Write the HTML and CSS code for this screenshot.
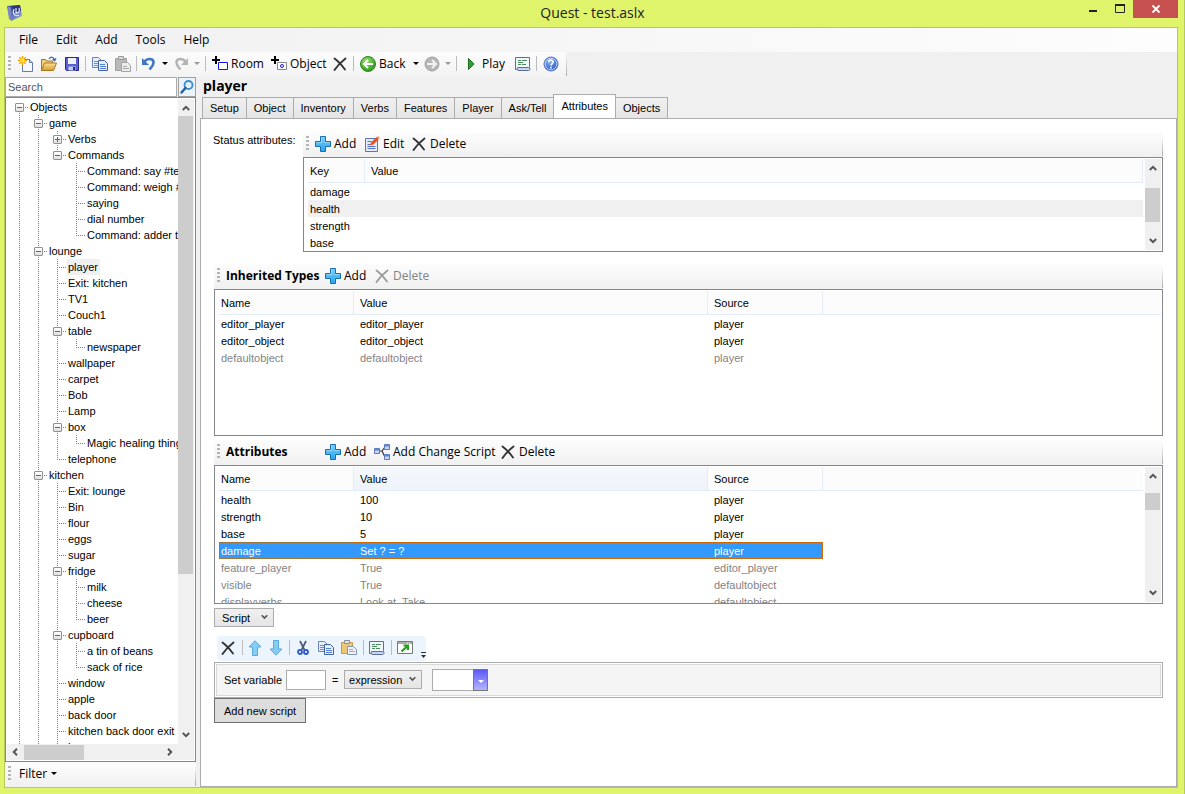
FILE: index.html
```html
<!DOCTYPE html>
<html lang="en">
<head>
<meta charset="utf-8">
<title>Quest - test.aslx</title>
<link rel="stylesheet" href="styles.css">
</head>
<body>
<svg class="defs" aria-hidden="true">
  <defs>
    <linearGradient id="gBlue" x1="0" y1="0" x2="0" y2="1"><stop offset="0" stop-color="#7fd0f8"/><stop offset="1" stop-color="#2aa4ea"/></linearGradient>
    <linearGradient id="gGold" x1="0" y1="0" x2="0" y2="1"><stop offset="0" stop-color="#fbe39a"/><stop offset="1" stop-color="#d99a2b"/></linearGradient>
    <radialGradient id="gGreen" cx=".4" cy=".3" r=".8"><stop offset="0" stop-color="#9be06a"/><stop offset="1" stop-color="#1f8f16"/></radialGradient>
    <radialGradient id="gHelp" cx=".4" cy=".3" r=".8"><stop offset="0" stop-color="#8fb6f5"/><stop offset="1" stop-color="#1748b8"/></radialGradient>
    <linearGradient id="gApp" x1="0" y1="0" x2="1" y2="1"><stop offset="0" stop-color="#1d2560"/><stop offset=".5" stop-color="#5a6cb8"/><stop offset="1" stop-color="#a9bbe8"/></linearGradient>
    <symbol id="i-plus" viewBox="0 0 16 16"><path d="M5.5.5h5v5h5v5h-5v5h-5v-5h-5v-5h5z" fill="url(#gBlue)" stroke="#1470b4"/><path d="M6.500 1.500v5h-5M9.500 6.500h5" fill="none" stroke="#a8e2fc" opacity=".7"/></symbol>
    <symbol id="i-x" viewBox="0 0 16 16"><path d="M2.500 2.500C6 5 10 9.500 13 13.500M13.500 2.500C9 6 5.500 9.500 2.500 14" fill="none" stroke="currentColor" stroke-width="1.900" stroke-linecap="round"/></symbol>
    <symbol id="i-edit" viewBox="0 0 16 16"><path d="M1.500 2.500h12v13h-12z" fill="#e4ecfb" stroke="#5a76b8"/><path d="M3.500 5.500h4M3.500 8.500h3M3.500 10.500h8M3.500 12.500h8" stroke="#5573c4"/><path d="M6 9.500l1-3L12.500 1l2.500 2L9.500 8.500z" fill="#e9531f"/><path d="M12.500 1L14 0l2 2-1 1z" fill="#f49a6a"/></symbol>
    <symbol id="i-flow" viewBox="0 0 16 16"><path d="M5 7h3M8 7l3-4M8 7l3 6" stroke="#333" stroke-width="1.200" fill="none"/><path d="M.5 4.500h5v5h-5zM10.500.5h5v5h-5zM10.500 10.500h5v5h-5z" fill="#c9d6f6" stroke="#5f78b8"/><path d="M1 5.500h4M11 1.500h4M11 11.500h4" stroke="#5b86d8" stroke-width="2"/></symbol>
    <symbol id="i-new" viewBox="0 0 16 16"><path d="M4.500 3.500h7l3 3v9h-10z" fill="#f4f8ff" stroke="#6b7b98"/><path d="M11.500 3.500v3h3" fill="#cfdcf2" stroke="#6b7b98"/><path d="M4.500 0v9M0 4.500h9M1.300 1.300l6.400 6.400M7.700 1.300L1.300 7.700" stroke="#f3a200" stroke-width="1.400"/><circle cx="4.500" cy="4.500" r="2.200" fill="#ffe14a"/></symbol>
    <symbol id="i-open" viewBox="0 0 16 16"><path d="M.5 14.500v-11h4l1 1.500h6v3" fill="#f1d080" stroke="#a87720"/><path d="M.5 14.500l3-7.500h12l-3 7.500z" fill="url(#gGold)" stroke="#a87720"/><path d="M8 3c2-3 5-2 5.500 1M11.500 3l2.200 1.800L15 2.300" fill="none" stroke="#3b67b8" stroke-width="1.200"/></symbol>
    <symbol id="i-save" viewBox="0 0 16 16"><path d="M1.500 1.500h13v13h-12l-1-1z" fill="#5a62d0" stroke="#23288c"/><path d="M4 2h8v6H4z" fill="#eef2fc"/><path d="M4.500 10.500h7v4h-7z" fill="#c8cef0"/><path d="M9 11h2v3H9z" fill="#23288c"/></symbol>
    <symbol id="i-copy" viewBox="0 0 16 16"><path d="M.5 1.500h6l3 3v7h-9z" fill="#e6eefc" stroke="#6485c0"/><path d="M2 5.500h4M2 7.500h4M2 9.500h4" stroke="#6c90d4"/><path d="M6.500 4.500h6l3 3v7h-9z" fill="#e6eefc" stroke="#3f62a8"/><path d="M8 8.500h5M8 10.500h6M8 12.500h6" stroke="#5580cf"/></symbol>
    <symbol id="i-pasteoff" viewBox="0 0 16 16"><path d="M.5 2.500h11v12H.5z" fill="#b9b9b9" stroke="#a0a0a0"/><path d="M3.500.5h5v3h-5z" fill="#dcdcdc" stroke="#999"/><path d="M6.500 6.500h6l3 3v6h-9z" fill="#ececec" stroke="#a4a4a4"/><path d="M8 10.500h4M8 12.500h6" stroke="#aaa"/></symbol>
    <symbol id="i-paste" viewBox="0 0 16 16"><path d="M.5 2.500h11v11H.5z" fill="#ebc878" stroke="#c99a48"/><path d="M3.500.5h5v3h-5z" fill="#dfe3ea" stroke="#8c8c98"/><path d="M6.500 6.500h6l3 3v5h-9z" fill="#eef2fa" stroke="#8493b4"/><path d="M8 9.500h4M8 11.500h6" stroke="#94a6cc"/></symbol>
    <symbol id="i-undo" viewBox="0 0 16 16"><path d="M3 6c3-4 9-4 9.500 0 .3 3-2 5-4 7.500" fill="none" stroke="#3f76c6" stroke-width="2.600"/><path d="M1 2v7h7z" fill="#3f76c6"/></symbol>
    <symbol id="i-redo" viewBox="0 0 16 16"><path d="M13 6c-3-4-9-4-9.500 0-.3 3 2 5 4 7.500" fill="none" stroke="#b4b4b4" stroke-width="2.400"/><path d="M15 2v7H8z" fill="#b4b4b4"/></symbol>
    <symbol id="i-room" viewBox="0 0 16 16"><path d="M4 0v8M0 4h8" stroke="#000" stroke-width="2"/><path d="M6.500 6.500h9v7h-9z" fill="#fff" stroke="#1414f0"/></symbol>
    <symbol id="i-object" viewBox="0 0 16 16"><path d="M4 0v8M0 4h8" stroke="#000" stroke-width="2"/><path d="M6.500 6.500h9v7h-9z" fill="#fff" stroke="#888"/><circle cx="11" cy="10" r="1.500" fill="none" stroke="#1414f0"/></symbol>
    <symbol id="i-back" viewBox="0 0 16 16"><circle cx="8" cy="8" r="7.500" fill="url(#gGreen)" stroke="#2d8a20"/><path d="M13 8H4.500M8 4L4 8l4 4" fill="none" stroke="#fff" stroke-width="2"/></symbol>
    <symbol id="i-fwd" viewBox="0 0 16 16"><circle cx="8" cy="8" r="7" fill="#b6b6b6" stroke="#a2a2a2"/><path d="M3 8h8.500M8 4l4 4-4 4" fill="none" stroke="#f2f2f2" stroke-width="2"/></symbol>
    <symbol id="i-play" viewBox="0 0 16 16"><path d="M5.500 2.500L11 8l-5.500 5.500z" fill="#2fa02c" stroke="#1c6e1e"/></symbol>
    <symbol id="i-log" viewBox="0 0 16 16"><path d="M.5 1.500h14v9l-1 3H.5z" fill="#f2f6ff" stroke="#5c6c9c"/><path d="M3 4.500h3M7 4.500h5M3 6.500h5M3 8.500h3M7 8.500h4" stroke="#4a8a5c"/><path d="M2.500 11.500h11c2 0 2 3 0 3H4c-2 0-2-1-1.500-3z" fill="#c8d6f2" stroke="#5c6c9c"/></symbol>
    <symbol id="i-help" viewBox="0 0 16 16"><circle cx="8" cy="8" r="7" fill="url(#gHelp)" stroke="#5078c8"/><circle cx="8" cy="8" r="5.800" fill="none" stroke="#dbe7ff" stroke-width=".8"/><path d="M5.800 6.300c0-3 4.500-2.800 4.400-.2C10.200 7.600 8 7.700 8 9.500M8 10.800v1.600" fill="none" stroke="#fff" stroke-width="1.600"/></symbol>
    <symbol id="i-up" viewBox="0 0 16 16"><path d="M8 .8L14 7h-3.500v8.500h-5V7H2z" fill="#86cdf3" stroke="#5aa7d8"/></symbol>
    <symbol id="i-down" viewBox="0 0 16 16"><path d="M8 15.200L14 9h-3.500V.5h-5V9H2z" fill="#86cdf3" stroke="#5aa7d8"/></symbol>
    <symbol id="i-cut" viewBox="0 0 16 16"><path d="M5 1l4.500 9M11 1L6.500 10" stroke="#4c5c78" stroke-width="1.700"/><circle cx="5" cy="12" r="2" fill="none" stroke="#2f5ccc" stroke-width="1.800"/><circle cx="11" cy="12" r="2" fill="none" stroke="#2f5ccc" stroke-width="1.800"/></symbol>
    <symbol id="i-popout" viewBox="0 0 16 16"><path d="M.5 1.500h15v12H.5z" fill="#fff" stroke="#777"/><path d="M1 3h14" stroke="#aaa" stroke-width="2"/><path d="M10 3h1M12 3h1" stroke="#fff"/><path d="M4.500 11.500L10 6.500M6.500 5.500h4.500v4.500" fill="none" stroke="#24a01c" stroke-width="2.200"/></symbol>
    <symbol id="i-find" viewBox="0 0 16 16"><circle cx="9.500" cy="6" r="4" fill="#e2f2fc" stroke="#3c8ccc" stroke-width="1.800"/><path d="M6.500 9L2.500 13.500" stroke="#2b5c98" stroke-width="2.400" stroke-linecap="round"/></symbol>
    <symbol id="i-app" viewBox="0 0 16 16"><path d="M0 1l13-1 2 11-11 5z" fill="url(#gApp)"/><path d="M0 1l2 13 3 2L4 2z" fill="#7886c6"/><path d="M5 1l8-1 1 6-8 2z" fill="#2a3478"/><path d="M7 4c-2 5 1 8 5 6M12 3c1 3 0 5-3 5M9 3v6" stroke="#dfe6fa" stroke-width="1.200" fill="none"/></symbol>
    <symbol id="i-caret" viewBox="0 0 6 3"><path d="M0 0h6L3 3z" fill="currentColor"/></symbol>
    <symbol id="i-chev" viewBox="0 0 8 6"><path d="M.8 1L4 4.200 7.200 1" fill="none" stroke="currentColor" stroke-width="2"/></symbol>
  </defs>
</svg>

<div class="window">
  <header class="titlebar">
    <svg class="icon"><use href="#i-app"/></svg>
    <h1 class="title">Quest - test.aslx</h1>
    <div class="winbtns">
      <button class="winbtn" aria-label="Minimize"><svg width="10" height="10"><path d="M1 7h8" stroke="#222" stroke-width="2"/></svg></button>
      <button class="winbtn" aria-label="Maximize"><svg width="10" height="10"><path d="M.5 1h9v7.500h-9z" fill="none" stroke="#222"/><path d="M0 1h10" stroke="#222" stroke-width="2"/></svg></button>
      <button class="winbtn winbtn-close" aria-label="Close"><svg width="10" height="10"><path d="M1.500 1.500l7 7M8.500 1.500l-7 7" stroke="#fff" stroke-width="1.800"/></svg></button>
    </div>
  </header>

  <div class="frame">
    <nav class="menu">
      <button>File</button><button>Edit</button><button>Add</button><button>Tools</button><button>Help</button>
    </nav>

    <div class="toolbar toolbar-main">
      <span class="grip"></span>
      <button class="tool" aria-label="New"><svg class="icon"><use href="#i-new"/></svg></button>
      <button class="tool" aria-label="Open"><svg class="icon"><use href="#i-open"/></svg></button>
      <button class="tool" aria-label="Save"><svg class="icon"><use href="#i-save"/></svg></button>
      <span class="sep"></span>
      <button class="tool" aria-label="Copy"><svg class="icon"><use href="#i-copy"/></svg></button>
      <button class="tool" aria-label="Paste" disabled><svg class="icon"><use href="#i-pasteoff"/></svg></button>
      <span class="sep"></span>
      <button class="tool tool-split" aria-label="Undo"><svg class="icon"><use href="#i-undo"/></svg></button>
      <button class="drop" aria-label="Undo list"><svg class="caret"><use href="#i-caret"/></svg></button>
      <button class="tool tool-split" aria-label="Redo" disabled><svg class="icon"><use href="#i-redo"/></svg></button>
      <button class="drop" aria-label="Redo list" disabled><svg class="caret"><use href="#i-caret"/></svg></button>
      <span class="sep"></span>
      <button class="tool tool-text w-room"><svg class="icon"><use href="#i-room"/></svg>Room</button>
      <button class="tool tool-text w-object"><svg class="icon"><use href="#i-object"/></svg>Object</button>
      <button class="tool" aria-label="Delete"><svg class="icon"><use href="#i-x"/></svg></button>
      <span class="sep"></span>
      <button class="tool tool-text w-back"><svg class="icon"><use href="#i-back"/></svg>Back</button>
      <button class="drop" aria-label="Back list"><svg class="caret"><use href="#i-caret"/></svg></button>
      <button class="tool tool-split" aria-label="Forward" disabled><svg class="icon"><use href="#i-fwd"/></svg></button>
      <button class="drop" aria-label="Forward list" disabled><svg class="caret"><use href="#i-caret"/></svg></button>
      <span class="sep"></span>
      <button class="tool tool-text w-play"><svg class="icon"><use href="#i-play"/></svg>Play</button>
      <button class="tool" aria-label="Log"><svg class="icon"><use href="#i-log"/></svg></button>
      <span class="sep"></span>
      <button class="tool" aria-label="Help"><svg class="icon"><use href="#i-help"/></svg></button>
    </div>

    <div class="body">
      <aside class="sidebar">
        <div class="search">
          <input class="search-input" type="text" placeholder="Search" aria-label="Search">
          <button class="search-btn" aria-label="Find"><svg class="icon"><use href="#i-find"/></svg></button>
        </div>
        <div class="treebox">
          <div class="tree-row">
            <div class="tree">
              <ul>
                <li class="root"><div class="node"><button class="exp" aria-label="Collapse"></button><span>Objects</span></div>
                  <ul>
                    <li><div class="node"><button class="exp" aria-label="Collapse"></button><span>game</span></div>
                      <ul>
                        <li><div class="node"><button class="exp exp-closed" aria-label="Expand"></button><span>Verbs</span></div></li>
                        <li><div class="node"><button class="exp" aria-label="Collapse"></button><span>Commands</span></div>
                          <ul>
                            <li><div class="node"><span>Command: say #text#</span></div></li>
                            <li><div class="node"><span>Command: weigh #object#</span></div></li>
                            <li><div class="node"><span>saying</span></div></li>
                            <li><div class="node"><span>dial number</span></div></li>
                            <li><div class="node"><span>Command: adder test</span></div></li>
                          </ul></li>
                      </ul></li>
                    <li><div class="node"><button class="exp" aria-label="Collapse"></button><span>lounge</span></div>
                      <ul>
                        <li><div class="node"><span class="current">player</span></div></li>
                        <li><div class="node"><span>Exit: kitchen</span></div></li>
                        <li><div class="node"><span>TV1</span></div></li>
                        <li><div class="node"><span>Couch1</span></div></li>
                        <li><div class="node"><button class="exp" aria-label="Collapse"></button><span>table</span></div>
                          <ul><li><div class="node"><span>newspaper</span></div></li></ul></li>
                        <li><div class="node"><span>wallpaper</span></div></li>
                        <li><div class="node"><span>carpet</span></div></li>
                        <li><div class="node"><span>Bob</span></div></li>
                        <li><div class="node"><span>Lamp</span></div></li>
                        <li><div class="node"><button class="exp" aria-label="Collapse"></button><span>box</span></div>
                          <ul><li><div class="node"><span>Magic healing thing</span></div></li></ul></li>
                        <li><div class="node"><span>telephone</span></div></li>
                      </ul></li>
                    <li class="more"><div class="node"><button class="exp" aria-label="Collapse"></button><span>kitchen</span></div>
                      <ul>
                        <li><div class="node"><span>Exit: lounge</span></div></li>
                        <li><div class="node"><span>Bin</span></div></li>
                        <li><div class="node"><span>flour</span></div></li>
                        <li><div class="node"><span>eggs</span></div></li>
                        <li><div class="node"><span>sugar</span></div></li>
                        <li><div class="node"><button class="exp" aria-label="Collapse"></button><span>fridge</span></div>
                          <ul>
                            <li><div class="node"><span>milk</span></div></li>
                            <li><div class="node"><span>cheese</span></div></li>
                            <li><div class="node"><span>beer</span></div></li>
                          </ul></li>
                        <li><div class="node"><button class="exp" aria-label="Collapse"></button><span>cupboard</span></div>
                          <ul>
                            <li><div class="node"><span>a tin of beans</span></div></li>
                            <li><div class="node"><span>sack of rice</span></div></li>
                          </ul></li>
                        <li><div class="node"><span>window</span></div></li>
                        <li><div class="node"><span>apple</span></div></li>
                        <li><div class="node"><span>back door</span></div></li>
                        <li><div class="node"><span>kitchen back door exit</span></div></li>
                        <li><div class="node"><span>house</span></div></li>
                      </ul></li>
                  </ul></li>
              </ul>
            </div>
            <div class="vscroll">
              <svg class="chev up"><use href="#i-chev"/></svg>
              <div class="track"><div class="thumb thumb-tree"></div></div>
              <svg class="chev"><use href="#i-chev"/></svg>
            </div>
          </div>
          <div class="hscroll">
            <svg class="chev left"><use href="#i-chev"/></svg>
            <div class="htrack"><div class="hthumb"></div></div>
            <svg class="chev right"><use href="#i-chev"/></svg>
          </div>
        </div>
        <div class="toolbar">
          <span class="grip"></span>
          <button class="filter">Filter<svg class="caret"><use href="#i-caret"/></svg></button>
        </div>
      </aside>

      <main class="main">
        <h2 class="heading">player</h2>
        <div class="tabs" role="tablist">
          <button class="tab" role="tab">Setup</button>
          <button class="tab" role="tab">Object</button>
          <button class="tab" role="tab">Inventory</button>
          <button class="tab" role="tab">Verbs</button>
          <button class="tab" role="tab">Features</button>
          <button class="tab" role="tab">Player</button>
          <button class="tab" role="tab">Ask/Tell</button>
          <button class="tab tab-on" role="tab" aria-selected="true">Attributes</button>
          <button class="tab" role="tab">Objects</button>
        </div>
        <div class="panel">
          <section class="status">
            <div class="status-label">Status attributes:</div>
            <div class="group">
              <div class="toolbar">
                <span class="grip"></span>
                <button class="tool tool-cmd w-add"><svg class="icon"><use href="#i-plus"/></svg>Add</button>
                <button class="tool tool-cmd w-edit"><svg class="icon"><use href="#i-edit"/></svg>Edit</button>
                <button class="tool tool-cmd"><svg class="icon"><use href="#i-x"/></svg>Delete</button>
              </div>
              <div class="list list-status">
                <table class="grid">
                  <colgroup><col class="c-key"><col></colgroup>
                  <thead><tr><th>Key</th><th>Value</th></tr></thead>
                  <tbody>
                    <tr><td>damage</td><td></td></tr>
                    <tr class="hover"><td>health</td><td></td></tr>
                    <tr><td>strength</td><td></td></tr>
                    <tr><td>base</td><td></td></tr>
                  </tbody>
                </table>
                <div class="vscroll">
                  <svg class="chev up"><use href="#i-chev"/></svg>
                  <div class="track track-status"><div class="thumb thumb-status"></div></div>
                  <svg class="chev"><use href="#i-chev"/></svg>
                </div>
              </div>
            </div>
          </section>

          <section class="group">
            <div class="toolbar">
              <span class="grip"></span>
              <h3 class="tool-title">Inherited Types</h3>
              <button class="tool tool-cmd w-add"><svg class="icon"><use href="#i-plus"/></svg>Add</button>
              <button class="tool tool-cmd" disabled><svg class="icon"><use href="#i-x"/></svg>Delete</button>
            </div>
            <div class="list list-types">
              <table class="grid">
                <colgroup><col class="c-name"><col class="c-value"><col class="c-source"><col></colgroup>
                <thead><tr><th>Name</th><th>Value</th><th>Source</th><th class="rest"></th></tr></thead>
                <tbody>
                  <tr><td>editor_player</td><td>editor_player</td><td>player</td><td></td></tr>
                  <tr><td>editor_object</td><td>editor_object</td><td>player</td><td></td></tr>
                  <tr class="dim"><td>defaultobject</td><td>defaultobject</td><td>player</td><td></td></tr>
                </tbody>
              </table>
            </div>
          </section>

          <section class="group group-attrs">
            <div class="toolbar">
              <span class="grip"></span>
              <h3 class="tool-title">Attributes</h3>
              <button class="tool tool-cmd w-add"><svg class="icon"><use href="#i-plus"/></svg>Add</button>
              <button class="tool tool-cmd w-change"><svg class="icon"><use href="#i-flow"/></svg>Add Change Script</button>
              <button class="tool tool-cmd"><svg class="icon"><use href="#i-x"/></svg>Delete</button>
            </div>
            <div class="list list-attrs">
              <table class="grid">
                <colgroup><col class="c-name"><col class="c-value"><col class="c-source"><col></colgroup>
                <thead><tr><th>Name</th><th class="hot">Value</th><th>Source</th><th class="rest"></th></tr></thead>
                <tbody>
                  <tr><td>health</td><td>100</td><td>player</td><td></td></tr>
                  <tr><td>strength</td><td>10</td><td>player</td><td></td></tr>
                  <tr><td>base</td><td>5</td><td>player</td><td></td></tr>
                  <tr class="selected"><td>damage</td><td>Set ? = ?</td><td>player</td><td></td></tr>
                  <tr class="dim"><td>feature_player</td><td>True</td><td>editor_player</td><td></td></tr>
                  <tr class="dim"><td>visible</td><td>True</td><td>defaultobject</td><td></td></tr>
                  <tr class="dim"><td>displayverbs</td><td>Look at, Take</td><td>defaultobject</td><td></td></tr>
                </tbody>
              </table>
              <div class="vscroll">
                <svg class="chev up"><use href="#i-chev"/></svg>
                <div class="track track-attrs"><div class="thumb thumb-attrs"></div></div>
                <svg class="chev"><use href="#i-chev"/></svg>
              </div>
            </div>
          </section>

          <section class="editor">
            <span class="selectbox w-type"><select aria-label="Attribute type"><option>Script</option></select><svg class="chev"><use href="#i-chev"/></svg></span>
            <div class="scriptbar">
              <button class="tool" aria-label="Delete"><svg class="icon"><use href="#i-x"/></svg></button>
              <span class="sep"></span>
              <button class="tool tool-near" aria-label="Move up"><svg class="icon"><use href="#i-up"/></svg></button>
              <button class="tool tool-near" aria-label="Move down"><svg class="icon"><use href="#i-down"/></svg></button>
              <span class="sep"></span>
              <button class="tool" aria-label="Cut"><svg class="icon"><use href="#i-cut"/></svg></button>
              <button class="tool" aria-label="Copy"><svg class="icon"><use href="#i-copy"/></svg></button>
              <button class="tool" aria-label="Paste"><svg class="icon"><use href="#i-paste"/></svg></button>
              <span class="sep"></span>
              <button class="tool" aria-label="Log"><svg class="icon"><use href="#i-log"/></svg></button>
              <span class="sep"></span>
              <button class="tool" aria-label="Pop out"><svg class="icon"><use href="#i-popout"/></svg></button>
              <button class="overflow" aria-label="More"><svg width="5" height="6"><path d="M0 .5h5" stroke="#333"/><path d="M0 3h5L2.500 6z" fill="#333"/></svg></button>
            </div>
            <div class="scriptbox">
              <div class="scriptline">
                <label for="var">Set variable</label>
                <input id="var" class="var" type="text">
                <span class="eq">=</span>
                <span class="selectbox w-expr"><select aria-label="Value kind"><option>expression</option></select><svg class="chev"><use href="#i-chev"/></svg></span>
                <span class="combo"><input type="text" aria-label="Expression"><button aria-label="Insert"><svg class="caret"><use href="#i-caret"/></svg></button></span>
              </div>
            </div>
            <button class="addscript">Add new script</button>
          </section>
        </div>
      </main>
    </div>
  </div>
</div>
</body>
</html>
```
FILE: styles.css
```css
* { box-sizing: border-box; }
body { margin: 0; font: 11px/16px "Liberation Sans", Arial, sans-serif; color: #000; }
button, input, select { font: inherit; color: inherit; margin: 0; border-radius: 0; }
button { border: 0; padding: 0; background: none; white-space: nowrap; }
h1, h2, h3, ul { margin: 0; padding: 0; }
ul { list-style: none; }
.defs { position: absolute; width: 0; height: 0; }
.icon { width: 16px; height: 16px; flex: none; display: block; }
.caret { width: 6px; height: 3px; flex: none; display: block; }
.chev { width: 8px; height: 6px; flex: none; display: block; color: #555; }
.chev.up { transform: rotate(180deg); }
.chev.left { transform: rotate(90deg); }
.chev.right { transform: rotate(-90deg); }

/* window chrome */
.window { height: 100vh; display: flex; flex-direction: column; background: #dff46b; padding: 0 6px 6px 4px; border-right: 1px solid #b8c95a; }
.titlebar { height: 27px; flex: none; display: grid; grid-template-columns: 1fr auto 1fr; align-items: center; padding: 0 0 2px 3px; }
.title { font: 14px/20px "Open Sans", "Noto Sans", sans-serif; color: #222; }
.winbtns { display: flex; justify-content: flex-end; align-self: start; }
.winbtn { width: 27px; height: 18px; display: flex; align-items: center; justify-content: center; }
.winbtn-close { width: 45px; background: #c75050; }
.frame { flex: 1; min-height: 0; display: flex; flex-direction: column; background: #f0f0f0; border: 1px solid #b8c95a; }

/* menu and toolbars */
.menu { height: 24px; flex: none; display: flex; align-items: center; gap: 18px; padding-left: 14px; background: linear-gradient(90deg, #f0f0f0, #fdfdfd); font: 12px/16px "Open Sans", "Noto Sans", sans-serif; }
.toolbar { height: 25px; flex: none; display: flex; align-items: center; padding-bottom: 2px; font: 12px/16px "Open Sans", "Noto Sans", sans-serif; border-radius: 3px 3px 0 0; background: linear-gradient(#fff, #aaa) right 3px / 1px 21px no-repeat, linear-gradient(#fdfdfd, #f0f0f0); }
.toolbar-main { width: 562px; background: linear-gradient(#f0f0f0, #aaa) right 3px / 1px 21px no-repeat, linear-gradient(#fcfcfc, #f3f3f3); }
.grip { width: 3px; height: 15px; margin: 0 3px 0 3px; background: repeating-linear-gradient(#b4b4b4 0 2px, transparent 2px 4px); }
.sep { width: 1px; height: 15px; margin: 0 2px; background: #bdbdbd; flex: none; }
.tool { width: 23px; height: 22px; display: flex; align-items: center; justify-content: center; flex: none; }
.tool .icon { color: #333; }
.tool:disabled { color: #838383; }
.tool:disabled .icon { color: #9c9c9c; }
.tool-split { width: 20px; }
.tool-near { width: 21px; }
.tool-text, .tool-cmd { width: auto; justify-content: flex-start; gap: 3px; }
.tool-text { padding-left: 4px; }
.tool-cmd { padding-left: 3px; }
.w-room { width: 59px; }
.w-object { width: 61px; }
.w-back { width: 54px; }
.w-play { width: 52px; }
.w-add { width: 49px; }
.w-edit { width: 47px; }
.w-change { width: 126px; }
.drop { width: 12px; height: 22px; display: flex; align-items: center; justify-content: center; flex: none; }
.drop:disabled { color: #999; }
.tool-title { width: 99px; padding-left: 3px; font-size: 12px; line-height: 16px; font-weight: 700; }
.filter { display: flex; align-items: center; gap: 4px; padding-left: 5px; }

.body { flex: 1; min-height: 0; display: flex; gap: 4px; }

/* sidebar */
.sidebar { width: 191px; flex: none; display: flex; flex-direction: column; }
.search { display: flex; gap: 1px; height: 20px; flex: none; }
.search-input { flex: 1; min-width: 0; border: 1px solid #ababab; padding: 0 2px; background: #fff; }
.search-input::placeholder { color: #555; opacity: 1; }
.search-btn { width: 18px; border: 1px solid #a0a0a0; background: #eaf2fb; display: flex; align-items: center; justify-content: center; }
.treebox { flex: 1; min-height: 0; display: flex; flex-direction: column; border: 1px solid #828790; padding: 1px; background: #fff; }
.tree-row { flex: 1; min-height: 0; display: flex; }
.tree { flex: 1; min-width: 0; overflow: hidden; padding-left: 8px; white-space: nowrap; }
.tree ul ul { padding-left: 19px; }
.tree li { background: repeating-linear-gradient(#808080 0 1px, transparent 1px 2px) 4px 0 / 1px 100% no-repeat; }
.tree li:last-child { background-size: 1px 8px; }
.tree li.root { background-position: 4px 8px; background-size: 1px 100%; }
.tree li.more { background-size: 1px 100%; }
.node { height: 16px; display: flex; align-items: center; padding-left: 14px; background: repeating-linear-gradient(90deg, #808080 0 1px, transparent 1px 2px) 4px 8px / 9px 1px no-repeat; }
.node span { padding: 0 2px 0 1px; }
.node .current { background: #f0f0f0; }
.exp { width: 9px; height: 9px; margin: 0 5px 0 -14px; border: 1px solid #919191; border-radius: 1px; background: linear-gradient(#4b63a7, #4b63a7) 1px 3px / 5px 1px no-repeat, linear-gradient(#fff, #e0e0e0); }
.exp-closed { background: linear-gradient(#4b63a7, #4b63a7) 1px 3px / 5px 1px no-repeat, linear-gradient(#4b63a7, #4b63a7) 3px 1px / 1px 5px no-repeat, linear-gradient(#fff, #e0e0e0); }

/* scroll bars */
.vscroll { width: 16px; flex: none; display: flex; flex-direction: column; align-items: center; padding: 6px 0; background: #f0f0f0; }
.track { flex: 1; width: 100%; padding: 5px 1px 5px 0; }
.thumb { background: #cdcdcd; }
.thumb-tree { height: 75%; }
.track-status { padding-top: 17px; }
.thumb-status { height: 34px; }
.track-attrs { padding-top: 14px; }
.thumb-attrs { height: 17px; }
.hscroll { height: 16px; flex: none; display: flex; align-items: center; background: #f0f0f0; padding: 0 20px 0 4px; }
.htrack { flex: 1; padding: 0 5px; }
.hthumb { width: 60px; height: 15px; background: #cdcdcd; }

/* main column */
.main { flex: 1; min-width: 0; display: flex; flex-direction: column; }
.heading { height: 17px; padding-left: 3px; font: 700 14px/17px "Open Sans", "Noto Sans", sans-serif; flex: none; }
.tabs { display: flex; align-items: flex-end; height: 25px; flex: none; padding-left: 2px; margin-bottom: -1px; }
.tab { height: 22px; margin-left: -1px; padding: 0 7px; border: 1px solid #acacac; background: linear-gradient(#f0f0f0, #e5e5e5); }
.tab:first-child { margin-left: 0; }
.tab-on { height: 25px; padding-bottom: 2px; background: #fff; border-bottom-color: #fff; }
.panel { flex: 1; min-height: 0; border: 1px solid #acacac; background: #fff; padding: 13px 13px 0 13px; }
.status { display: flex; margin-bottom: 12px; }
.status-label { width: 90px; flex: none; margin-left: -1px; }
.group { flex: 1; min-width: 0; }
.group-attrs { margin-top: 4px; }

.list { display: flex; border: 1px solid #828790; padding: 1px 1px 1px 4px; overflow: hidden; background: #fff; }
.list-status { height: 95px; }
.list-types { height: 147px; }
.list-attrs { height: 139px; }
.grid { flex: 1; align-self: flex-start; width: 100%; table-layout: fixed; border-collapse: separate; border-spacing: 0; }
.list .vscroll { margin-left: 2px; }
.grid th { height: 24px; padding: 0 0 0 6px; text-align: left; font-weight: 400; background: #fcfcfc; border-right: 1px solid #e3edf9; border-bottom: 1px solid #e3edf9; }
.grid th.hot { background: linear-gradient(#f5f9fd, #eef3fa); }
.grid th.rest { border-right: 0; }
.grid td { height: 17px; line-height: 15px; padding: 2px 0 0 6px; white-space: nowrap; }
.grid th:first-child, .grid td:first-child { padding-left: 2px; }
.c-key { width: 57px; }
.c-name { width: 135px; }
.c-value { width: 354px; }
.c-source { width: 115px; }
.hover td { background: #f0f0f0; }
.dim td { color: #838383; }
.selected td:not(:last-child) {
  --dots: repeating-linear-gradient(90deg, #cc6600 0 1px, #a87838 1px 2px);
  --side: repeating-linear-gradient(#cc6600 0 1px, #a87838 1px 2px);
  color: #fff;
  background: var(--dots) top / 100% 1px no-repeat, var(--dots) bottom / 100% 1px no-repeat, #3399ff;
}
.selected td:first-child { background: var(--side) left / 1px 100% no-repeat, var(--dots) top / 100% 1px no-repeat, var(--dots) bottom / 100% 1px no-repeat, #3399ff !important; }
.selected td:nth-child(3) { background: var(--side) right / 1px 100% no-repeat, var(--dots) top / 100% 1px no-repeat, var(--dots) bottom / 100% 1px no-repeat, #3399ff !important; }

/* script editor */
.editor { margin-top: 4px; }
.selectbox { position: relative; display: inline-flex; }
.selectbox select { appearance: none; width: 100%; height: 19px; padding: 0 0 0 7px; border: 1px solid #acacac; background: linear-gradient(#f0f0f0, #e5e5e5); }
.w-expr select { padding-left: 4px; }
.selectbox .chev { position: absolute; right: 6px; top: 6px; pointer-events: none; width: 7px; }
.w-type { width: 60px; display: flex; }
.w-expr { width: 78px; margin-right: 10px; }
.scriptbar { display: flex; align-items: center; width: 209px; height: 25px; margin: 9px 0 1px 3px; padding-bottom: 2px; border-radius: 3px; background: #ecf4fd; }
.scriptbar .tool { padding-right: 1px; }
.overflow { align-self: flex-end; padding: 0 0 1px 4px; }
.overflow svg { display: block; }
.scriptbox { border: 1px solid #acacac; padding: 1px; }
.scriptline { display: flex; align-items: center; height: 32px; padding: 0 0 1px 7px; background: #f5f5f5; border: 1px solid #d8d8d8; }
.var { width: 40px; height: 20px; margin-left: 4px; border: 1px solid #acacac; background: #fff; }
.eq { width: 18px; text-align: center; }
.combo { display: flex; height: 22px; }
.combo input { width: 41px; border: 1px solid #acacac; border-right: 0; background: #fff; }
.combo button { width: 15px; border: 1px solid #777; background: linear-gradient(#5a5af5, #b4b4ff); color: #fff; display: flex; align-items: center; justify-content: center; padding-top: 4px; }
.addscript { display: block; width: 92px; height: 25px; border: 1px solid #707070; background: #dddddd; }
```
